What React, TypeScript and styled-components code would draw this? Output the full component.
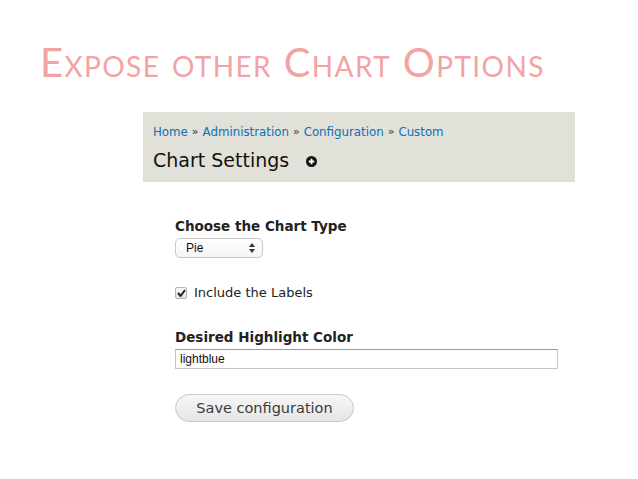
import React from "react";
import styled, { createGlobalStyle } from "styled-components";

const Global = createGlobalStyle`
  html, body { margin: 0; padding: 0; background: #fff; }
  body { width: 638px; height: 479px; overflow: hidden; }
`;

const Page = styled.div`
  width: 638px;
  height: 479px;
  display: flex;
  flex-direction: column;
`;

const Title = styled.h1`
  margin: 0;
  padding: 38px 0 0 40px;
  height: 74px;
  box-sizing: border-box;
  font-family: "Lato", "DejaVu Sans", sans-serif;
  font-weight: 400;
  font-size: 40px;
  line-height: 48px;
  font-variant: small-caps;
  letter-spacing: 1.4px;
  color: #f2a3a3;
  white-space: nowrap;
`;

const Header = styled.div`
  margin: 38px 0 0 143px;
  width: 432px;
  height: 70px;
  background: #e1e0d9;
  box-sizing: border-box;
  padding: 12px 0 0 10px;
  display: flex;
  flex-direction: column;
  gap: 6px;
`;

const Crumbs = styled.div`
  font-family: "DejaVu Sans", sans-serif;
  font-size: 11.8px;
  line-height: 16px;
  color: #333;
  display: flex;
  gap: 4px;
  align-items: center;
`;

const Crumb = styled.a`
  color: #0a72b5;
  text-decoration: none;
`;

const Sep = styled.span`
  color: #333;
  font-size: 11px;
`;

const PageTitle = styled.div`
  font-family: "DejaVu Sans", sans-serif;
  font-size: 19px;
  line-height: 28px;
  color: #111;
  display: flex;
  align-items: center;
  gap: 17px;
`;

const AddIcon = styled.svg`
  width: 11px;
  height: 11px;
  margin-top: 2px;
`;

const Form = styled.div`
  padding: 35px 0 0 175px;
  display: flex;
  flex-direction: column;
`;

const Label = styled.div<{ $gap?: number }>`
  margin-top: ${(p) => p.$gap ?? 0}px;
  font-family: "DejaVu Sans", sans-serif;
  font-weight: bold;
  font-size: 13.5px;
  line-height: 18px;
  color: #222;
`;

const Select = styled.div`
  margin-top: 3px;
  width: 88px;
  height: 20px;
  box-sizing: border-box;
  border: 1px solid #c8c8c8;
  border-radius: 5px;
  background: linear-gradient(#fff, #f4f4f4);
  display: flex;
  align-items: center;
  justify-content: space-between;
  padding: 0 7px 0 10px;
  font-family: "Liberation Sans", Arial, sans-serif;
  font-size: 12px;
  color: #111;
`;

const CheckRow = styled.label`
  margin-top: 27px;
  display: flex;
  align-items: center;
  gap: 7px;
  font-family: "DejaVu Sans", sans-serif;
  font-size: 13px;
  color: #222;
`;

const Box = styled.span`
  width: 10px;
  height: 10px;
  border: 1px solid #b5b5b5;
  border-radius: 2px;
  background: linear-gradient(#fafafa, #e2e2e2);
  display: flex;
  align-items: center;
  justify-content: center;
`;

const TextInput = styled.div`
  margin-top: 3px;
  width: 383px;
  height: 20px;
  box-sizing: border-box;
  border: 1px solid #c6c6c6;
  border-top-color: #9a9a9a;
  padding: 0 4px;
  font-family: "Liberation Sans", Arial, sans-serif;
  font-size: 12px;
  line-height: 18px;
  color: #111;
`;

const Button = styled.button`
  margin-top: 25px;
  width: 179px;
  height: 28px;
  border: 1px solid #c9c9c9;
  border-radius: 14px;
  background: linear-gradient(#f6f6f6, #e6e6e6);
  font-family: "DejaVu Sans", sans-serif;
  font-size: 14.5px;
  color: #3a3a3a;
  padding: 0;
  cursor: pointer;
`;

export default function App() {
  return (
    <Page>
      <Global />
      <Title>Expose other Chart Options</Title>
      <Header>
        <Crumbs>
          <Crumb href="#">Home</Crumb>
          <Sep>»</Sep>
          <Crumb href="#">Administration</Crumb>
          <Sep>»</Sep>
          <Crumb href="#">Configuration</Crumb>
          <Sep>»</Sep>
          <Crumb href="#">Custom</Crumb>
        </Crumbs>
        <PageTitle>
          Chart Settings
          <AddIcon viewBox="0 0 12 12">
            <circle cx="6" cy="6" r="6" fill="#111" />
            <path d="M6 3v6M3 6h6" stroke="#fff" strokeWidth="2" />
          </AddIcon>
        </PageTitle>
      </Header>
      <Form>
        <Label>Choose the Chart Type</Label>
        <Select>
          <span>Pie</span>
          <svg width="6" height="10" viewBox="0 0 6 10">
            <path d="M3 0L6 4H0z" fill="#333" />
            <path d="M3 10L6 6H0z" fill="#333" />
          </svg>
        </Select>
        <CheckRow>
          <Box>
            <svg width="9" height="8" viewBox="0 0 9 8">
              <path d="M1 4l2.5 3L8 1" stroke="#222" strokeWidth="2" fill="none" />
            </svg>
          </Box>
          Include the Labels
        </CheckRow>
        <Label $gap={28}>Desired Highlight Color</Label>
        <TextInput>lightblue</TextInput>
        <Button>Save configuration</Button>
      </Form>
    </Page>
  );
}
